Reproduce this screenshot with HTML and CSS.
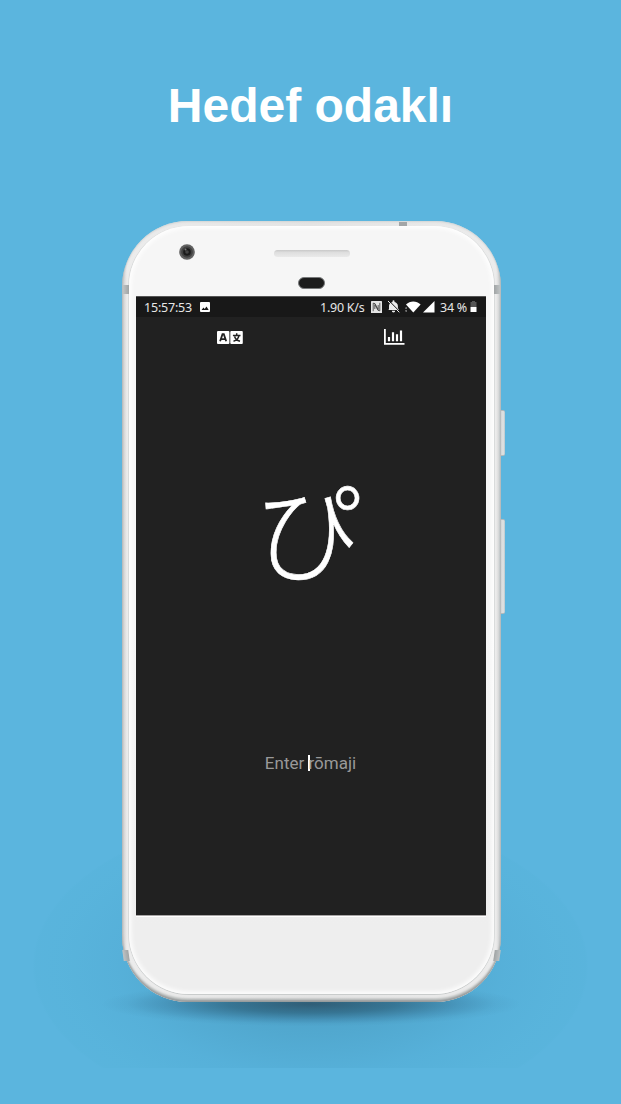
FILE: index.html
```html
<!DOCTYPE html>
<html lang="tr">
<head>
<meta charset="utf-8">
<title>Hedef odaklı</title>
<link rel="stylesheet" href="styles.css">
</head>
<body>
<main class="page">
  <h1 class="title">Hedef odaklı</h1>
  <div class="stage">
    <div class="halo"></div>
    <div class="shadow"></div>
    <div class="key key-power"></div>
    <div class="key key-volume"></div>
    <div class="phone">
      <i class="band band-top"></i>
      <i class="band band-tl"></i>
      <i class="band band-tr"></i>
      <i class="band band-bl"></i>
      <i class="band band-br"></i>
      <div class="face">
        <div class="bezel">
          <svg class="camera" width="16" height="16" viewBox="0 0 16 16"><circle cx="8" cy="8" r="7.8" fill="#626262"/><circle cx="8" cy="8" r="5.8" fill="#414141"/><circle cx="8" cy="8" r="3.8" fill="#1b1b1b"/><circle cx="8" cy="8" r="1.8" fill="#444"/><circle cx="6.5" cy="5.5" r="1" fill="#777"/></svg>
          <div class="speaker"></div>
          <div class="sensor"></div>
        </div>
        <div class="screen">
          <div class="status">
            <span class="clock">15:57:53</span>
            <svg class="picture" width="10" height="10" viewBox="0 0 10 10"><rect width="10" height="10" rx="1" fill="#fff"/><path d="M1.5 8 3.5 5.5 4.7 7 6.5 4.6 8.7 8z" fill="#181818"/></svg>
            <span class="speed">1.90 K/s</span>
            <svg class="nfc" width="11" height="12" viewBox="0 0 11 12"><rect width="11" height="12" rx=".6" fill="#e4e4e4"/><path d="M2.2 10.2V2.2L4 2.6 7.2 8.6V4M8.8 1.8V9.8L7 9.4 3.8 3.6V8" fill="none" stroke="#222" stroke-width=".7"/></svg>
            <svg class="bell" width="13" height="13" viewBox="0 0 13 13"><path d="M2 9.5V6C2 3.7 3.6 2.4 5.5 2V1.3a1 1 0 0 1 2 0V2c2 .4 3.4 2 3.4 4v2.3l1.3 1.7H.8z" fill="#eee"/><path d="M4.8 10.8h3.4a1.7 1.7 0 0 1-3.4 0z" fill="#eee"/><path d="M1.8.5 13 11.8" stroke="#181818" stroke-width="1"/><path d="M1 1 12.3 12.3" stroke="#eee" stroke-width="1"/></svg>
            <svg class="wifi" width="16" height="12" viewBox="0 0 16 12"><path d="M1 3.4C5-.6 11.5-.6 15.6 3.4L8.3 11.6z" fill="#fff"/><path d="M0 7.6h2.2L1.1 6zM0 9.4h2.2L1.1 11z" fill="#ccc"/></svg>
            <svg class="signal" width="12" height="12" viewBox="0 0 12 12"><path d="M11.5 0V11.5H0z" fill="#fff"/></svg>
            <span class="percent">34 %</span>
            <svg class="battery" width="7" height="11" viewBox="0 0 7 11"><path d="M2 0h3v1h1.5v5H.5V1H2z" fill="#555"/><path d="M.5 6h6v5h-6z" fill="#fff"/></svg>
          </div>
          <nav class="tabs">
            <svg class="tab" width="26" height="13" viewBox="0 0 26 13"><rect width="12.4" height="13" rx="1" fill="#fff"/><rect x="13.3" width="12.5" height="13" rx="1" fill="#fff"/><path d="M3.1 10.3 5.5 3.2h1.3L9.2 10.3M4.3 8.2h3.8" fill="none" stroke="#222" stroke-width="1.8"/><path d="M15.9 4.5h7.6M19.7 2.3v2.2M22 4.7C21.3 7.7 19.2 9.5 16.5 10.3M17.6 5.5C18.2 7.7 20.2 9.5 23 10.3" fill="none" stroke="#222" stroke-width="1.5"/></svg>
            <svg class="tab" width="21" height="16" viewBox="0 0 21 16"><path d="M.9 0V14.8H20.5" fill="none" stroke="#fff" stroke-width="1.8"/><path d="M5 8V12.3M9 3.2V12.3M13 5.3V12.3M17 1.6V12.3" fill="none" stroke="#fff" stroke-width="2.2"/></svg>
          </nav>
          <div class="kana" lang="ja">ぴ</div>
          <div class="answer">Enter <span class="caret"></span>rōmaji</div>
        </div>
      </div>
    </div>
  </div>
</main>
</body>
</html>
```
FILE: styles.css
```css
* { box-sizing: border-box; }
body { margin: 0; }
svg { display: block; flex: none; }
.page {
  width: 621px;
  height: 1104px;
  overflow: hidden;
  background: #5bb5de;
  color: #fff;
}
.title {
  margin: 0;
  padding-top: 78px;
  height: 221px;
  font: bold 48px/56px "Liberation Sans", sans-serif;
  text-align: center;
  white-space: nowrap;
}
.stage { position: relative; height: 883px; }
.halo {
  position: absolute;
  left: 32px;
  top: 590px;
  width: 557px;
  height: 257px;
  background: radial-gradient(ellipse 278px 155px at 50% 155px, rgba(50,120,155,.4) 0%, rgba(60,140,175,.3) 45%, rgba(70,160,200,.22) 70%, rgba(80,175,212,.22) 90%, rgba(80,175,212,.16) 99%, transparent 100%);
}
.shadow {
  position: absolute;
  left: 101px;
  top: 758px;
  width: 420px;
  height: 50px;
  background: radial-gradient(ellipse 50% 45%, rgba(38,70,90,.75) 0%, rgba(38,85,110,.6) 40%, rgba(50,110,145,.35) 70%, rgba(60,130,165,.12) 88%, transparent 100%);
}
.key {
  position: absolute;
  left: 499px;
  width: 6px;
  border-radius: 0 2px 2px 0;
  background: linear-gradient(90deg, #b4b8b9, #d2d4d5 35%, #e2e4e4 70%, #b9c6cc);
  border: solid #b5babb;
  border-width: 1px 0;
}
.key-power { top: 189px; height: 46px; }
.key-volume { top: 298px; height: 95px; }
.phone {
  position: relative;
  width: 379px;
  height: 781px;
  margin-left: 122px;
  padding: 5px 7px 8px;
  border-radius: 66px;
  background: linear-gradient(90deg, #bfc2c3, #dedede 3px, #ececec 5px, #e4e4e4 50%, #ececec 374px, #dedede 376px, #b9c0c3);
  box-shadow: inset 0 -2px 2px #969a9b, inset 0 -4px 2px #c8cbca, inset 0 1px 2px #d2d5d6;
}
.face {
  height: 768px;
  padding: 0 8px 0 7px;
  border-radius: 60px;
  background: linear-gradient(#f6f6f6 0 400px, #eee 700px);
  box-shadow: 0 1px 0 #c9cccc, 1px 0 0 #d9dbdb, -1px 0 0 #d9dbdb, inset 0 0 5px 2px #fff;
  overflow: hidden;
}
.band { position: absolute; width: 6px; height: 9px; background: linear-gradient(90deg, #bfc3c4, #a0a4a5); }
.band-top { left: 277px; top: 1px; width: 8px; height: 4px; background: #a3a6a7; }
.band-tl { left: 1px; top: 64px; }
.band-tr { right: 1px; top: 64px; transform: scaleX(-1); }
.band-bl { left: 1px; top: 729px; height: 11px; transform: skewX(8deg); }
.band-br { right: 1px; top: 729px; height: 11px; transform: scaleX(-1) skewX(8deg); }
.bezel {
  display: grid;
  grid-template-columns: 138px 76px;
  grid-template-rows: 34px 37px;
  height: 71px;
}
.camera { margin: 18px 0 0 43px; }
.speaker {
  height: 7px;
  margin-top: 24px;
  border-radius: 4px;
  background: linear-gradient(#c8c8c8, #dedede 35%, #eaeaea);
}
.sensor {
  grid-column: 2;
  width: 27px;
  height: 12px;
  margin: 17px 0 0 24px;
  border-radius: 6px;
  background: #1c1c1c;
  border: 1px solid #77797a;
}
.screen {
  width: 350px;
  height: 618px;
  background: #212121;
  box-shadow: 0 1px 0 #a8a5a5, 0 2px 0 #fff, 0 -1px 0 #555;
  text-align: center;
}
.status {
  display: flex;
  align-items: flex-start;
  height: 20px;
  padding: 4px 0 0 8px;
  background: #181818;
  font: 12.5px/14px "Noto Sans", sans-serif;
  color: #e6e6e6;
  white-space: nowrap;
}
.clock { width: 56px; text-align: left; letter-spacing: -.2px; }
.picture { margin-top: 1px; }
.speed { width: 45px; margin-left: 110px; text-align: left; letter-spacing: -.25px; }
.nfc { margin: 0 0 0 6px; }
.bell { margin: -1px 0 0 5px; }
.wifi { margin: 0 0 0 5px; }
.signal { margin: 0 0 0 2px; }
.percent { width: 29px; margin-left: 5px; text-align: left; letter-spacing: -.25px; }
.battery { margin: 0 0 0 1px; }
.tabs { display: flex; height: 43px; padding: 12px 0 0 81px; gap: 141px; }
.tab:first-child { margin-top: 2px; }
.kana {
  height: 385px;
  padding: 89px 6px 0 0;
  font: 300 107px/156px "Noto Sans CJK JP", sans-serif;
  -webkit-text-stroke: .6px #fff;
}
.answer {
  font: 17px/24px Roboto, sans-serif;
  color: #999;
  padding: 6px 1px 0 0;
}
.caret {
  display: inline-block;
  width: 2px;
  height: 16px;
  margin-right: -2px;
  background: #fff;
  vertical-align: -2px;
}
```
